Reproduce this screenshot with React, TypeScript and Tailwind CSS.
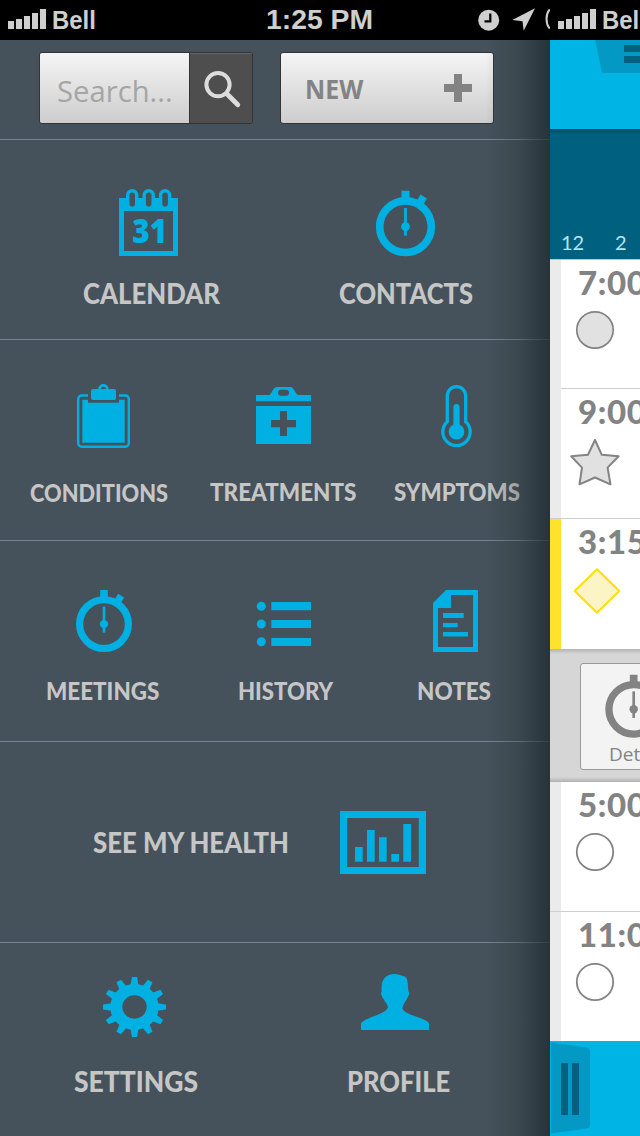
import { useLayoutEffect, useRef, useState, type ReactNode } from 'react';

/** One line of text condensed or widened to fill the given width. */
function FitText({ width, className, children }: { width: number; className: string; children: ReactNode }) {
  const ref = useRef<HTMLSpanElement>(null);
  const [scale, setScale] = useState(1);
  useLayoutEffect(() => {
    if (ref.current) setScale(width / ref.current.offsetWidth);
  }, [width]);
  return (
    <div className={className} style={{ width }}>
      <span ref={ref} className="inline-block origin-left whitespace-nowrap" style={{ transform: `scaleX(${scale})` }}>
        {children}
      </span>
    </div>
  );
}

function Drawing({ box, children, className = '' }: { box: [number, number, number, number]; children: ReactNode; className?: string }) {
  return (
    <svg width={box[2]} height={box[3]} viewBox={box.join(' ')} className={'block shrink-0 ' + className}>
      {children}
    </svg>
  );
}

function Item({ label, x, width, top, height, small, children }: {
  label: string; x: number; width: number; top: number; height: number; small?: boolean; children: ReactNode;
}) {
  return (
    <div className="flex flex-col">
      <Drawing box={[x, top, width, height]} className="text-[#00b0e3]">{children}</Drawing>
      <FitText
        width={width}
        className={small
          ? "font-['Lato',sans-serif] text-[24px] leading-[30px] font-black text-[#c6c6c6]"
          : "font-['Lato',sans-serif] text-[28px] leading-[30px] font-black text-[#c6c6c6]"}
      >
        {label}
      </FitText>
    </div>
  );
}

function Stopwatch({ transform }: { transform: string }) {
  return (
    <g transform={transform} fill="currentColor">
      <circle r="25.8" fill="none" stroke="currentColor" strokeWidth="7.6" />
      <path d="M-4-36H4v9H-4zM15-32.2 21.3-28.2 18-22.2 11.5-26.2z" />
      <path d="M-1.4-18.7H1.4V9H-1.4z" />
      <circle r="4.4" />
    </g>
  );
}

function Signal() {
  return (
    <div className="flex h-5 items-end gap-0.5">
      <i className="h-2 w-1.5 bg-[#cfcfcf]" />
      <i className="h-[10px] w-1.5 bg-[#cfcfcf]" />
      <i className="h-[13px] w-1.5 bg-[#cfcfcf]" />
      <i className="h-4 w-1.5 bg-[#cfcfcf]" />
      <i className="h-5 w-1.5 bg-[#cfcfcf]" />
    </div>
  );
}

const statusText = "font-['Liberation_Sans',sans-serif] text-[25px] leading-[40px] font-bold text-[#cfcfcf]";

function Menu() {
  return (
    <div className="relative flex h-full w-[550px] shrink-0 flex-col overflow-hidden bg-[#45525b]">
      <header className="flex h-10 shrink-0 bg-black pl-2">
        <div className="pt-[9px]"><Signal /></div>
        <FitText width={44} className={"ml-[6px] " + statusText}>Bell</FitText>
        <FitText width={107} className={"ml-[170px] text-[27px]! " + statusText}>1:25 PM</FitText>
        <Drawing box={[475, 0, 75, 40]} className="ml-auto">
          <circle cx="488.7" cy="20.2" r="10.5" fill="#cfcfcf" />
          <path d="M490.3 13.5V21.3H484.5" fill="none" stroke="#000" strokeWidth="2.2" />
          <path d="M535 8.3 512.3 20 522.5 21.3 523.7 30.7z" fill="#cfcfcf" />
          <path d="M549.8 9.5C545.4 14 545.4 24 549.8 28.5" fill="none" stroke="#cfcfcf" strokeWidth="2" />
        </Drawing>
      </header>

      <div className="flex h-[100px] shrink-0 gap-[27px] border-b border-[#6f8894] pt-3 pl-[39px]">
        <div className="flex h-[72px] w-[214px] overflow-hidden rounded-[3px] border border-[#333]">
          <div className="w-[149px] bg-linear-to-b from-[#f5f5f5] to-[#cdcdcd] pt-[18px] pl-[17px]">
            <FitText width={116} className="font-['Open_Sans',sans-serif] text-[30px] leading-[40px] text-[#a5a5a5]">Search...</FitText>
          </div>
          <div className="flex flex-1 border-l border-[#333] bg-[#4e4e4e] shadow-[inset_0_1px_0_#666]">
            <Drawing box={[190, 53, 62, 70]}>
              <circle cx="218" cy="84.6" r="11.6" fill="none" stroke="#dcdcdc" strokeWidth="4" />
              <path d="M227 94 237.8 104.7" stroke="#dcdcdc" strokeWidth="4.8" strokeLinecap="round" />
            </Drawing>
          </div>
        </div>
        <div className="flex h-[72px] w-[214px] rounded-[3px] border border-[#333] bg-linear-to-b from-[#f5f5f5] to-[#cdcdcd] pl-6">
          <FitText width={58} className="pt-4 font-['Open_Sans',sans-serif] text-[27px] leading-[40px] font-bold text-[#838383]">NEW</FitText>
          <Drawing box={[440, 53, 36, 70]} className="ml-[77px]">
            <path d="M454 74h8v10h10v8h-10v10h-8v-10h-10v-8h10z" fill="#838383" />
          </Drawing>
        </div>
      </div>

      <div className="flex h-[200px] shrink-0 gap-[119px] border-b border-[#6f8894] pl-[83px]">
        <Item label="CALENDAR" x={83} width={137} top={140} height={138}>
          <path d="M119 198h59v58h-59zM124 211v40h49v-40z" fill="currentColor" fillRule="evenodd" />
          <g fill="#45525b" stroke="currentColor" strokeWidth="3.4">
            <rect x="127.7" y="190.7" width="9" height="17.6" rx="4.5" />
            <rect x="144.2" y="190.7" width="9" height="17.6" rx="4.5" />
            <rect x="160.6" y="190.7" width="9" height="17.6" rx="4.5" />
          </g>
          <text x="132.2" y="243" textLength="35" lengthAdjust="spacingAndGlyphs" className="font-['Open_Sans',sans-serif] text-[33px] font-extrabold" fill="currentColor">31</text>
        </Item>
        <Item label="CONTACTS" x={339} width={134} top={140} height={138}>
          <Stopwatch transform="translate(405.5 226.7)" />
        </Item>
      </div>

      <div className="flex h-[201px] shrink-0 border-b border-[#6f8894] pl-[30px]">
        <Item small label="CONDITIONS" x={30} width={138} top={340} height={138}>
          <rect x="78.2" y="395.5" width="50.6" height="51.3" rx="3.5" fill="none" stroke="currentColor" strokeWidth="2.4" />
          <path d="M82.3 399.7h42.4v43H82.3z" fill="currentColor" />
          <path d="M88 393h31v9.7H88z" fill="#45525b" />
          <path fillRule="evenodd" d="M93 389h5.2C98.4 382.3 108.3 382.3 108.7 389H114q2 0 2 2v7q0 2-2 2H93q-2 0-2-2v-7q0-2 2-2zM101 389h5C105.5 386 101.5 386 101 389z" fill="currentColor" />
        </Item>
        <div className="ml-[42px]">
          <Item small label="TREATMENTS" x={210} width={146} top={340} height={137}>
            <path fillRule="evenodd" d="M256 395h13.5C272 394 272.5 387 277.5 387H290C294.5 387 295 394 298 395H311v6.3H256zM281 389.7a3 3 0 0 0 0 6h5a3 3 0 0 0 0-6z" fill="currentColor" />
            <path fillRule="evenodd" d="M256 406h55v38h-55zM280 411v9h-9v7.3h9v8.7h7v-8.7h9v-7.3h-9v-9z" fill="currentColor" />
          </Item>
        </div>
        <div className="ml-[38px]">
          <Item small label="SYMPTOMS" x={394} width={126} top={340} height={137}>
            <path d="M447.3 421.7V395.9a9.2 9.2 0 0 1 18.4 0V421.7A13.7 13.7 0 1 1 447.3 421.7z" fill="none" stroke="currentColor" strokeWidth="3.3" />
            <path d="M456.5 407V430" stroke="currentColor" strokeWidth="6.2" strokeLinecap="round" />
            <circle cx="456.5" cy="431.7" r="7.8" fill="currentColor" />
          </Item>
        </div>
      </div>

      <div className="flex h-[201px] shrink-0 border-b border-[#6f8894] pl-[46px]">
        <Item small label="MEETINGS" x={46} width={113} top={541} height={135}>
          <Stopwatch transform="translate(104 624.1) scale(.945)" />
        </Item>
        <div className="ml-[79px]">
          <Item small label="HISTORY" x={238} width={95} top={541} height={135}>
            <g fill="currentColor">
              <circle cx="261.3" cy="606.2" r="4.5" />
              <circle cx="261.3" cy="624" r="4.5" />
              <circle cx="261.3" cy="641.8" r="4.5" />
              <path d="M271.3 602H311v8.3H271.3zM271.3 620H311v8H271.3zM271.3 638H311v8H271.3z" />
            </g>
          </Item>
        </div>
        <div className="ml-[84px]">
          <Item small label="NOTES" x={417} width={74} top={541} height={135}>
            <path fillRule="evenodd" d="M446 590H478V652H433V603zM451 595V608H438V647H473V595z" fill="currentColor" />
            <path d="M443 613h20.7v5H443zM443 623h14.7v4.3H443zM443 632h25v4.5H443z" fill="currentColor" />
          </Item>
        </div>
      </div>

      <div className="flex h-[201px] shrink-0 items-center border-b border-[#6f8894] pl-[93px]">
        <FitText width={196} className="font-['Lato',sans-serif] text-[28px] leading-[30px] font-black text-[#c6c6c6]">SEE MY HEALTH</FitText>
        <Drawing box={[340, 811, 86, 63]} className="ml-[51px]">
          <path fillRule="evenodd" d="M340 811h86v63h-86zM347.2 818v49h71.6v-49z" fill="#00b0e3" />
          <path d="M355 847h7.7v14.7H355zM367 830h7.7v31.7H367zM379 837.3h7.7v24.4H379zM391.3 854h7.7v7.7H391.3zM403.3 824h7.7v37.7H403.3z" fill="#00b0e3" />
        </Drawing>
      </div>

      <div className="flex flex-1 gap-[149px] pl-[74px]">
        <Item label="SETTINGS" x={74} width={124} top={943} height={123}>
          <g transform="translate(134.5 1007) scale(1 .955)" fill="currentColor">
            <circle r="18.2" fill="none" stroke="currentColor" strokeWidth="12" />
            {[0, 30, 60, 90, 120, 150, 180, 210, 240, 270, 300, 330].map((a) => (
              <path key={a} d="M-4-22.5-2.6-31.5H2.6L4-22.5z" transform={`rotate(${a})`} />
            ))}
          </g>
        </Item>
        <Item label="PROFILE" x={347} width={103} top={943} height={123}>
          <path
            transform="translate(60 960) scale(.33333)"
            d="M903 210V190C918 170 977 165 984 142C983 130 965 116 963 100L965 94C962 60 975 42 1005 42C1015 42 1020 46 1027 47C1043 50 1043 60 1045 92L1048 100C1045 115 1031 128 1027 145C1035 168 1093 170 1107 190V210z"
            fill="currentColor"
          />
        </Item>
      </div>

      <div className="pointer-events-none absolute top-10 right-0 bottom-0 w-[64px] bg-linear-to-r from-transparent via-[#1f2b30]/25 to-[#1f2b30]/80" />
    </div>
  );
}

function Row({ time, className, strip, children }: { time: string; className: string; strip: string; children: ReactNode }) {
  return (
    <div className={'flex shrink-0 bg-white ' + className}>
      <div className={'w-[11px] shrink-0 ' + strip} />
      <div className="w-[100px] shrink-0">
        <div className="h-[43px] pt-0.5 pl-[17px] font-['Lato',sans-serif] text-[33px] leading-[40px] font-black tracking-[0.6px] whitespace-nowrap text-[#838383]">{time}</div>
        {children}
      </div>
    </div>
  );
}

function Schedule() {
  return (
    <div className="flex h-full w-[90px] shrink-0 flex-col overflow-hidden bg-white">
      <header className="flex h-10 shrink-0 bg-black pl-2">
        <div className="pt-[9px]"><Signal /></div>
        <FitText width={44} className={"ml-[6px] shrink-0 " + statusText}>Bell</FitText>
      </header>
      <div className="h-[89px] shrink-0 bg-[#00b4e6]">
        <Drawing box={[550, 40, 90, 89]}>
          <path d="M595 40H640V73H604Q602 73 601.5 70.5z" fill="#0499c5" />
          <path d="M624 45h16v7h-16zM624 56h16v7h-16z" fill="#02617f" />
        </Drawing>
      </div>
      <div className="flex h-[131px] shrink-0 items-end border-b border-[#b5c4ca] bg-linear-to-b from-[#004a61] to-[#006080] to-[5px] pb-[5px] pl-[11px] font-['Lato',sans-serif] text-[20px] leading-[24px] text-[#b6e2fa]">
        <span className="w-[54px]">12</span>
        <span>2</span>
      </div>
      <Row time="7:00" className="h-[129px]" strip="bg-[#ebebeb]">
        <Drawing box={[561, 303, 90, 86]}>
          <circle cx="595" cy="330" r="18.2" fill="#e1e1e1" stroke="#838383" strokeWidth="1.7" />
          <path d="M561 388.500H651" stroke="#cfcfcf" />
        </Drawing>
      </Row>
      <Row time="9:00" className="h-[130px]" strip="bg-[#ebebeb]">
        <Drawing box={[561, 432, 90, 84]}>
          <path d="M595 440 601.8 454.8 618.7 456.3 607.6 467.6 610.5 484.3 595 477.5 579.5 484.3 582 467.6 571.2 456.3 588 454.8z" fill="#e1e1e1" stroke="#838383" strokeWidth="2" strokeLinejoin="round" />
        </Drawing>
      </Row>
      <Row time="3:15" className="h-[130px] shadow-[0_-1px_0_#cfcfcf]" strip="bg-[#ffe22c]">
        <Drawing box={[561, 562, 90, 84]}>
          <path d="M597 569.3 619.3 591 597 612.7 574.7 591z" fill="#fdf4c6" stroke="#ffe000" strokeWidth="2" strokeLinejoin="round" />
        </Drawing>
      </Row>
      <div className="flex h-[133px] shrink-0 bg-linear-to-b from-[#b3b3b3] via-[#d6d6d6] via-[5px] to-[#d6d6d6]">
        <div className="flex w-full bg-linear-to-t from-[#b0b0b0] to-transparent to-[5px] pt-[14px] pl-[30px]">
          <div className="h-[107px] w-[106px] shrink-0 rounded-[3px] border border-[#999] bg-[#f3f3f3] text-[#838383]">
            <Drawing box={[581, 664, 104, 80]}>
              <Stopwatch transform="translate(633.7 709.3) scale(.96)" />
            </Drawing>
            <div className="pl-[28px] font-['Open_Sans',sans-serif] text-[19px] leading-[20px] font-normal">Details</div>
          </div>
        </div>
      </div>
      <Row time="5:00" className="h-[129px]" strip="bg-[#ebebeb]">
        <Drawing box={[561, 825, 90, 84]}>
          <circle cx="595" cy="852" r="18.2" fill="#fff" stroke="#838383" strokeWidth="1.8" />
        </Drawing>
      </Row>
      <Row time="11:00" className="h-[130px] border-t border-[#cfcfcf]" strip="bg-[#ebebeb]">
        <Drawing box={[561, 955, 90, 84]}>
          <circle cx="595" cy="982" r="18.2" fill="#fff" stroke="#838383" strokeWidth="1.8" />
        </Drawing>
      </Row>
      <footer className="flex-1 bg-[#00b4e6]">
        <Drawing box={[550, 1041, 90, 95]}>
          <path d="M551 1042.5 587 1047.5Q590 1048 590 1051V1125Q590 1128 587 1128.5L551 1133.5z" fill="#0499c5" />
          <path d="M561 1063h7v52h-7zM572 1063h7v52h-7z" fill="#02617f" />
        </Drawing>
      </footer>
    </div>
  );
}

export default function App() {
  return (
    <main className="flex h-[1136px] w-[640px] overflow-hidden">
      <Menu />
      <Schedule />
    </main>
  );
}
